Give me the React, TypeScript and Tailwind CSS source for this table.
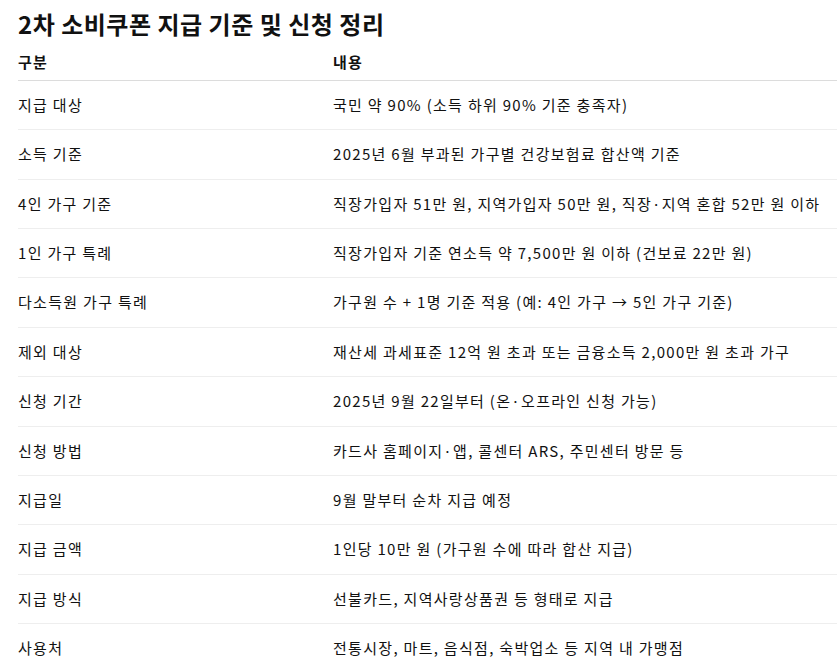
const rows: [string, string][] = [
  ["지급 대상", "국민 약 90% (소득 하위 90% 기준 충족자)"],
  ["소득 기준", "2025년 6월 부과된 가구별 건강보험료 합산액 기준"],
  ["4인 가구 기준", "직장가입자 51만 원, 지역가입자 50만 원, 직장·지역 혼합 52만 원 이하"],
  ["1인 가구 특례", "직장가입자 기준 연소득 약 7,500만 원 이하 (건보료 22만 원)"],
  ["다소득원 가구 특례", "가구원 수 + 1명 기준 적용 (예: 4인 가구 → 5인 가구 기준)"],
  ["제외 대상", "재산세 과세표준 12억 원 초과 또는 금융소득 2,000만 원 초과 가구"],
  ["신청 기간", "2025년 9월 22일부터 (온·오프라인 신청 가능)"],
  ["신청 방법", "카드사 홈페이지·앱, 콜센터 ARS, 주민센터 방문 등"],
  ["지급일", "9월 말부터 순차 지급 예정"],
  ["지급 금액", "1인당 10만 원 (가구원 수에 따라 합산 지급)"],
  ["지급 방식", "선불카드, 지역사랑상품권 등 형태로 지급"],
  ["사용처", "전통시장, 마트, 음식점, 숙박업소 등 지역 내 가맹점"],
];

export default function App() {
  return (
    <div className="min-h-screen bg-white pl-[18px] text-[#111] font-['Noto_Sans_CJK_KR','Noto_Sans',sans-serif]">
      <h2 className="pt-[8px] text-[24px] font-bold leading-[32px] tracking-[0.5px]">2차 소비쿠폰 지급 기준 및 신청 정리</h2>
      <table className="mt-[4px] w-full border-collapse text-left text-[15px] tracking-[1.3px]">
        <thead>
          <tr className="border-b border-[#dcdcdc]">
            <th className="w-[315px] pt-[6px] pb-[6px] font-bold leading-[24px]">구분</th>
            <th className="pt-[6px] pb-[6px] font-bold leading-[24px]">내용</th>
          </tr>
        </thead>
        <tbody>
          {rows.map(([k, v], i) => (
            <tr key={k} className={i < rows.length - 1 ? "border-b border-[#eeeeee]" : ""}>
              <td className="py-[12px] leading-[24.36px] whitespace-nowrap">{k}</td>
              <td className="py-[12px] leading-[24.36px] whitespace-nowrap">{v}</td>
            </tr>
          ))}
        </tbody>
      </table>
    </div>
  );
}
